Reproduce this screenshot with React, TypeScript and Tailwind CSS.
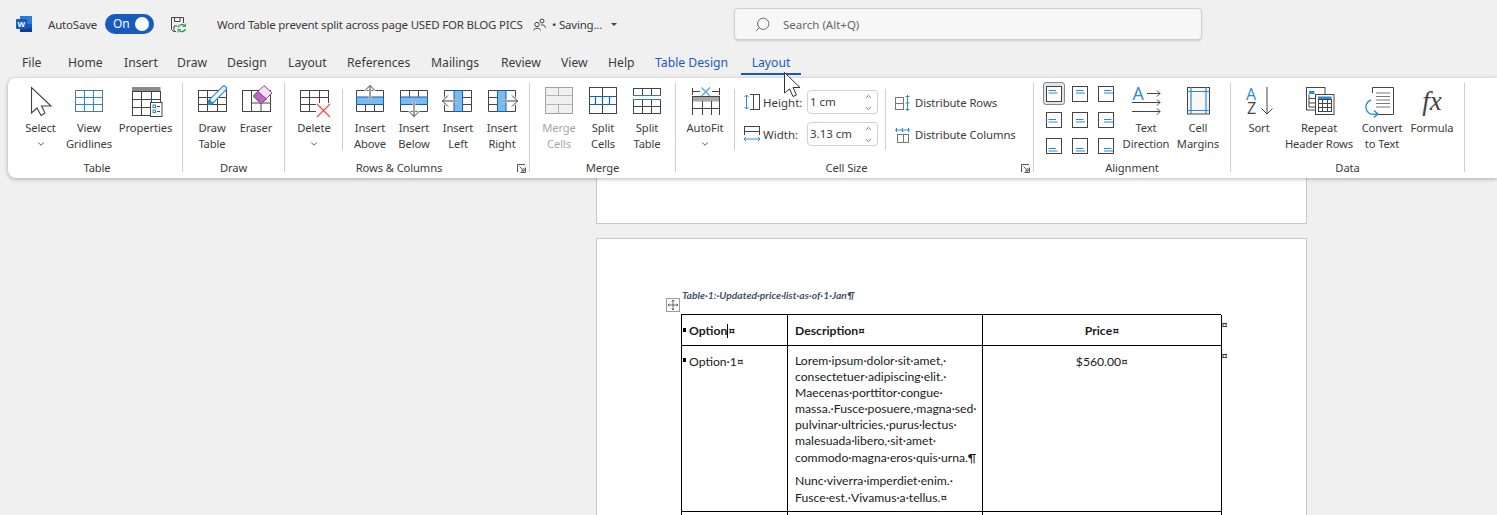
import React from 'react';
import { Search, ChevronDown, ChevronUp } from 'lucide-react';

const DK = '#444';
const BL = '#2b8ad8';
const NV = '#0f62b5';
const LB = '#7db9ea';

function G({ x, y, w, h, c = 1, r = 1, s = DK, f = 'none' }: { x: number; y: number; w: number; h: number; c?: number; r?: number; s?: string; f?: string }) {
  const cols = Array.from({ length: c - 1 }, (_, i) => x + Math.round(((i + 1) * w) / c));
  const rows = Array.from({ length: r - 1 }, (_, i) => y + Math.round(((i + 1) * h) / r));
  return (
    <g stroke={s} fill="none" strokeWidth="1" shapeRendering="crispEdges">
      <rect x={x + 0.5} y={y + 0.5} width={w} height={h} fill={f} />
      {cols.map((v) => (
        <line key={'c' + v} x1={v + 0.5} x2={v + 0.5} y1={y} y2={y + h} />
      ))}
      {rows.map((v) => (
        <line key={'r' + v} x1={x} x2={x + w} y1={v + 0.5} y2={v + 0.5} />
      ))}
    </g>
  );
}

function Ic({ children }: { children: React.ReactNode }) {
  return (
    <svg width="34" height="34" viewBox="0 0 34 34" className="block overflow-visible">
      {children}
    </svg>
  );
}

function Arrow({ d }: { d: string }) {
  return (
    <>
      <path d={d} stroke="#fff" strokeWidth="2.6" fill="none" />
      <path d={d} stroke={DK} fill="none" />
    </>
  );
}

const icons = {
  select: (
    <Ic>
      <path d="M7.5 3.5V29L13 24L17 31.5L21 29L17.5 22H27Z" fill="#fff" stroke={DK} strokeWidth="1.1" />
    </Ic>
  ),
  gridlines: (
    <Ic>
      <G x={3} y={6} w={27} h={21} c={3} r={3} s={BL} />
      <rect x="3.5" y="6.5" width="27" height="21" fill="none" stroke="#4a7a9f" />
    </Ic>
  ),
  properties: (
    <Ic>
      <G x={3} y={7} w={28} h={24} c={3} r={3} />
      <rect x="3" y="3" width="28.5" height="4" fill="#8c8c8c" />
      <rect x="21.5" y="18.5" width="11.5" height="14" fill="#fff" stroke={DK} />
      <rect x="24" y="21" width="2.5" height="2.5" fill="none" stroke={BL} />
      <rect x="24" y="26" width="2.5" height="2.5" fill="none" stroke={BL} />
      <path d="M28 22.5h3M28 27.5h3" stroke={DK} />
    </Ic>
  ),
  drawTable: (
    <Ic>
      <G x={3} y={6} w={28} h={21} c={3} r={3} />
      <path d="M16 17.5L29 4.5" stroke={BL} strokeWidth="6" strokeLinecap="round" />
      <path d="M16 17.5L29 4.5" stroke="#f4faff" strokeWidth="3.6" strokeLinecap="round" />
      <path d="M12.5 21.5L14 15L19 19.5Z" fill={BL} />
    </Ic>
  ),
  eraser: (
    <Ic>
      <G x={3} y={6} w={28} h={21} />
      <path d="M12.5 6V27M22 19V27M12.5 19H31" stroke={DK} />
      <path d="M14.5 12L25 1.5L33 9L22 20Z" fill="#f4e3f4" stroke="#8f3f94" />
      <path d="M14.5 12L19 7.5L27.5 15L22 20Z" fill="#c065c4" stroke="#8f3f94" />
    </Ic>
  ),
  deleteT: (
    <Ic>
      <G x={3} y={6} w={28} h={21} c={3} r={3} />
      <rect x="19" y="19" width="15" height="15" fill="#fff" />
      <path d="M20 20L33 33M33 20L20 33" stroke="#ee4f4f" strokeWidth="1.3" />
    </Ic>
  ),
  insAbove: (
    <Ic>
      <path d="M3.5 6.5V27.5H30.5V6.5H3.5M12.5 20V27M21.5 20V27" stroke={DK} fill="none" />
      <rect x="3.5" y="13" width="27" height="7.5" fill={LB} stroke={NV} />
      <Arrow d="M17 16V1.5M11.5 7L17 1.5L22.5 7" />
    </Ic>
  ),
  insBelow: (
    <Ic>
      <path d="M3.5 6.5V27.5H30.5V6.5H3.5M12.5 6V13M21.5 6V13" stroke={DK} fill="none" />
      <rect x="3.5" y="13" width="27" height="7.5" fill={LB} stroke={NV} />
      <Arrow d="M17 17V32.5M11.5 27L17 32.5L22.5 27" />
    </Ic>
  ),
  insLeft: (
    <Ic>
      <path d="M3.5 6.5V27.5H30.5V6.5H3.5M21 13.5H30M21 20.5H30" stroke={DK} fill="none" />
      <rect x="13" y="6.5" width="8.5" height="21" fill={LB} stroke={NV} />
      <Arrow d="M17 17H1.5M7 11.5L1.5 17L7 22.5" />
    </Ic>
  ),
  insRight: (
    <Ic>
      <path d="M3.5 6.5V27.5H30.5V6.5H3.5M4 13.5H13M4 20.5H13" stroke={DK} fill="none" />
      <rect x="12.5" y="6.5" width="8.5" height="21" fill={LB} stroke={NV} />
      <Arrow d="M17 17H32.5M27 11.5L32.5 17L27 22.5" />
    </Ic>
  ),
  merge: (
    <Ic>
      <G x={3} y={3} w={27} h={26} s="#a0a0a0" f="#f0f0f0" />
      <path d="M3 11.5H30M3 20.5H30M16.5 3V11M16.5 21V29" stroke="#b5b5b5" />
    </Ic>
  ),
  splitCells: (
    <Ic>
      <G x={3} y={3} w={27} h={26} />
      <path d="M16.5 3V12M16.5 21V29" stroke={DK} />
      <path d="M3 12.5H30M3 20.5H30M9.5 12.5V20.5M16.5 12.5V20.5M23.5 12.5V20.5" stroke={NV} strokeWidth="1.2" />
    </Ic>
  ),
  splitTable: (
    <Ic>
      <G x={3} y={4} w={27} h={7} c={3} />
      <path d="M3 11.5H31" stroke="#2b7cc4" />
      <G x={3} y={15} w={27} h={14} c={3} r={2} />
      <path d="M3 15.5H31" stroke="#2b7cc4" />
    </Ic>
  ),
  autofit: (
    <Ic>
      <path d="M4.5 4V11M31.5 4V11M5 7.5H12M24 7.5H31" stroke={DK} />
      <path d="M13.5 3.5L22 12M22 3.5L13.5 12" stroke="#55a8ea" strokeWidth="1.3" />
      <rect x="4" y="13" width="28" height="4.5" fill="#a8a8a8" />
      <path d="M4 12.5H32M4.5 13V31M31.5 13V31M14.5 17V31M23.5 17V31M4 24.5H32" stroke={DK} />
    </Ic>
  ),
  textDir: (
    <Ic>
      <text x="3.5" y="16" fontFamily="'Open Sans', sans-serif" fontSize="18" fill={BL}>
        A
      </text>
      <path d="M18 9.5H31M28 6.5L31 9.5L28 12.5" stroke={DK} fill="none" />
      <path d="M3 18.5H31M28 15.5L31 18.5L28 21.5" stroke={DK} fill="none" />
      <path d="M3 27.5H31M28 24.5L31 27.5L28 30.5" stroke={DK} fill="none" />
    </Ic>
  ),
  margins: (
    <Ic>
      <rect x="6" y="3" width="23" height="27" fill="#f7f7f7" />
      <rect x="6.5" y="3.5" width="22" height="26.5" fill="none" stroke={DK} />
      <path d="M6 7.5H29M6 26.5H29M10 3V30M25 3V30" stroke={BL} strokeWidth="1.2" />
    </Ic>
  ),
  sort: (
    <Ic>
      <text x="4" y="16" fontFamily="'Open Sans', sans-serif" fontSize="16" fill={BL}>
        A
      </text>
      <text x="5" y="30" fontFamily="'Open Sans', sans-serif" fontSize="16" fill={DK}>
        Z
      </text>
      <path d="M25 3V30M19.5 24.5L25 30L30.5 24.5" stroke={DK} fill="none" />
    </Ic>
  ),
  repeat: (
    <Ic>
      <rect x="4.5" y="3.5" width="18.5" height="22.5" fill="#fff" stroke={DK} />
      <rect x="7" y="7" width="5.5" height="3" fill={BL} />
      <path d="M7 10.5V23M7 14.5H13M7 19H13M7 23H13" stroke={DK} />
      <rect x="13.5" y="10.5" width="18.5" height="20" fill="#fff" stroke={DK} />
      <rect x="16" y="12.5" width="13.5" height="3" fill={BL} />
      <G x={16} y={15} w={13} h={12} c={3} r={3} />
    </Ic>
  ),
  convert: (
    <Ic>
      <path d="M7.5 9V3.5H28.5V30.5H9" fill="#fff" stroke={DK} />
      <path d="M11 9H25M11 12.5H25M11 16H25M11 19.5H25M11 23H25" stroke="#777" />
      <path d="M6 16C1.5 17.5 0 22 1.5 26C3 29.5 7 31 12 30" stroke={BL} strokeWidth="1.4" fill="none" />
      <path d="M9 26.5L13 30L9 33.5" stroke={BL} strokeWidth="1.4" fill="none" />
    </Ic>
  ),
};

function Btn({ icon, lines, w, chevron, off, extra }: { icon?: React.ReactNode; lines: string[]; w: string; chevron?: boolean; off?: boolean; extra?: React.ReactNode }) {
  return (
    <div className={`flex flex-col items-center ${w}`}>
      <div className="mt-[6px] flex h-[34px] w-[34px] items-center justify-center">{icon ?? extra}</div>
      <div className={`mt-[2px] text-center text-[11.2px] leading-[16px] tracking-[-0.1px] whitespace-nowrap ${off ? 'text-[#a6a6a6]' : 'text-[#3b3b3b]'}`}>
        {lines.map((l) => (
          <div key={l}>{l}</div>
        ))}
        {chevron && (
          <div className="flex h-[16px] items-center justify-center">
            <ChevronDown className="h-[10px] w-[10px]" strokeWidth={2} />
          </div>
        )}
      </div>
    </div>
  );
}

function Launcher() {
  return (
    <svg width="9" height="9" viewBox="0 0 9 9" className="absolute top-[4px] right-[3px]">
      <path d="M0.5 8V0.5H8M8.5 3.5V8.5H3.5M2.5 2.5L7 7M4 7H7V4" fill="none" stroke="#555" strokeWidth="1" />
    </svg>
  );
}

function Group({ label, w, pad, lab = '', launcher, children }: { label: string; w: string; pad: string; lab?: string; launcher?: boolean; children: React.ReactNode }) {
  return (
    <>
      <div className={`flex h-full flex-col ${w}`}>
        <div className={`flex h-[82px] ${pad}`}>{children}</div>
        <div className={`relative h-[18px] text-center text-[11.2px] leading-[16px] tracking-[-0.1px] text-[#3b3b3b] ${lab}`}>
          {label}
          {launcher && <Launcher />}
        </div>
      </div>
      <Sep h="h-[89px]" my="mt-[5px]" />
    </>
  );
}

function Sep({ h, my }: { h: string; my: string }) {
  return <div className={`w-px shrink-0 bg-[#cfcfcf] ${h} ${my}`} />;
}

function Spin({ value }: { value: string }) {
  return (
    <div className="flex h-[24px] w-[71px] items-center justify-between rounded-[4px] border border-[#d1d1d1] pr-[4px] pl-[2px] text-[11.5px] text-[#3b3b3b]">
      <span>{value}</span>
      <div className="flex flex-col text-[#555]">
        <ChevronUp className="h-[9px] w-[9px]" strokeWidth={2} />
        <ChevronDown className="mt-[3px] h-[9px] w-[9px]" strokeWidth={2} />
      </div>
    </div>
  );
}

function AlignCell({ v, h, on }: { v: 0 | 1 | 2; h: 0 | 1 | 2; on?: boolean }) {
  const y = [4.5, 7.5, 10.5][v];
  const x1 = [2.5, 4, 6][h];
  return (
    <div className="relative flex h-[26px] w-[26px] items-center justify-center">
      {on && <div className="absolute top-[1px] left-[2px] h-[23px] w-[22px] rounded-[3px] border border-[#8a8a8a] bg-[#e4e4e4]" />}
      <svg width="16" height="16" viewBox="0 0 16 16" className="relative">
        <rect x="0.5" y="0.5" width="15" height="15" fill="#fff" stroke={DK} />
        <path d={`M${x1} ${y}H${x1 + 7.5}M${x1} ${y + 2.5}H${x1 + 9}`} stroke={BL} />
      </svg>
    </div>
  );
}

const tabs = [
  { t: 'File', c: 'w-[68px] pl-[22px]' },
  { t: 'Home', c: 'w-[56px]' },
  { t: 'Insert', c: 'w-[53px]' },
  { t: 'Draw', c: 'w-[50px]' },
  { t: 'Design', c: 'w-[61px]' },
  { t: 'Layout', c: 'w-[59px]' },
  { t: 'References', c: 'w-[84px]' },
  { t: 'Mailings', c: 'w-[70px]' },
  { t: 'Review', c: 'w-[60px]' },
  { t: 'View', c: 'w-[47px]' },
  { t: 'Help', c: 'w-[47px]' },
  { t: 'Table Design', c: 'w-[95px] text-[#185abd]' },
];

const DOC = "font-['Lato',_'Open_Sans',_sans-serif]";

export default function App() {
  return (
    <div className="relative h-[515px] w-[1497px] overflow-hidden bg-[#f0f0f0] font-['Noto_Sans',_'Open_Sans',_sans-serif] text-[#3b3b3b]">
      {/* title bar */}
      <div className="flex h-[46px] items-center pt-[2px]">
        <div className="flex w-[734px] items-center text-[11.5px] tracking-[-0.2px]">
          <svg width="16" height="16" viewBox="0 0 16 16" className="ml-[16px]">
            <rect x="4" y="0" width="12" height="16" fill="#2b7cd3" />
            <rect x="4" y="8" width="12" height="4" fill="#185abd" />
            <rect x="4" y="12" width="12" height="4" fill="#103f91" />
            <rect x="0" y="3" width="11" height="10" rx="1" fill="#185abd" />
            <text x="1.5" y="11" fontSize="8" fontWeight="700" fill="#fff" fontFamily="'Liberation Sans', sans-serif">
              W
            </text>
          </svg>
          <span className="ml-[16px] w-[57px] pt-[1px]">AutoSave</span>
          <div className="flex h-[20px] w-[49px] items-center justify-between rounded-full bg-[#185abd] pr-[5px] pl-[8px] text-[12px] text-white">
            <span>On</span>
            <span className="h-[14px] w-[14px] rounded-full bg-white" />
          </div>
          <svg width="17" height="17" viewBox="0 0 17 17" className="ml-[16px]">
            <path d="M1.5 1.5H13.5V7M6 15.5H3.5L1.5 13.5V1.5M4.5 1.5V5.5H10V1.5M4 15V10H7" fill="none" stroke={DK} />
            <path d="M8 11.5A4 4 0 0 1 15 10M15.5 13A4 4 0 0 1 9 14.5" fill="none" stroke="#2e9e5b" strokeWidth="1.4" />
            <path d="M15.5 7.5V10.5H12.5M8 16.5V13.5H11" fill="none" stroke="#2e9e5b" />
          </svg>
          <span className="ml-[30px] w-[316px] pt-[1px] whitespace-nowrap">Word Table prevent split across page USED FOR BLOG PICS</span>
          <svg width="13" height="13" viewBox="0 0 13 13">
            <circle cx="4" cy="6.5" r="2.2" fill="none" stroke={DK} />
            <path d="M0.5 12.5C1 9.5 7 9.5 7.5 12.5" fill="none" stroke={DK} />
            <circle cx="9" cy="3" r="2" fill="none" stroke={DK} />
            <path d="M8 7C10 6.5 12.5 7.5 12.5 10" fill="none" stroke={DK} />
          </svg>
          <span className="ml-[6px] pt-[1px] whitespace-nowrap">• Saving...</span>
          <span className="ml-[9px] h-0 w-0 border-x-[3px] border-t-[3px] border-x-transparent border-t-[#444]" />
        </div>
        <div className="flex h-[32px] w-[468px] items-center rounded-[4px] border border-[#cfcfcf] bg-[#f7f7f7] pl-[19px] text-[11.5px] text-[#666] shadow-[0_1px_2px_rgba(0,0,0,0.15)]">
          <Search className="h-[17px] w-[17px] -scale-x-100 text-[#555]" strokeWidth={1.2} />
          <span className="ml-[12px] pt-[1px]">Search (Alt+Q)</span>
        </div>
      </div>

      {/* tabs */}
      <div className="flex h-[32px] items-center pt-[2px] text-[12.2px]">
        {tabs.map((t) => (
          <span key={t.t} className={`shrink-0 pt-[1px] whitespace-nowrap ${t.c}`}>
            {t.t}
          </span>
        ))}
        <div className="relative ml-[-9px] flex h-[30px] w-[60px] items-center justify-center pt-[1px] text-[#185abd]">
          Layout
          <div className="absolute right-0 bottom-[3px] left-0 h-[2px] bg-[#185abd]" />
        </div>
      </div>

      {/* ribbon */}
      <div className="relative z-10 ml-[8px] flex h-[100px] items-start rounded-l-lg bg-white shadow-[0_1px_4px_rgba(0,0,0,0.3)]">
        <Group label="Table" w="w-[174px]" pad="pl-[10px]" lab="pl-[4px]">
          <Btn w="w-[45px]" icon={icons.select} lines={['Select']} chevron />
          <Btn w="w-[52px]" icon={icons.gridlines} lines={['View', 'Gridlines']} />
          <Btn w="w-[61px]" icon={icons.properties} lines={['Properties']} />
        </Group>
        <Group label="Draw" w="w-[101px]" pad="pl-[7px]">
          <Btn w="w-[44px]" icon={icons.drawTable} lines={['Draw', 'Table']} />
          <Btn w="w-[44px]" icon={icons.eraser} lines={['Eraser']} />
        </Group>
        <Group label="Rows & Columns" w="w-[244px]" pad="pl-[4px]" lab="pr-[16px]" launcher>
          <Btn w="w-[50px]" icon={icons.deleteT} lines={['Delete']} chevron />
          <div className="mr-[5px] ml-[3px]">
            <Sep h="h-[61px]" my="mt-[11px]" />
          </div>
          <Btn w="w-[44px]" icon={icons.insAbove} lines={['Insert', 'Above']} />
          <Btn w="w-[44px]" icon={icons.insBelow} lines={['Insert', 'Below']} />
          <Btn w="w-[44px]" icon={icons.insLeft} lines={['Insert', 'Left']} />
          <Btn w="w-[44px]" icon={icons.insRight} lines={['Insert', 'Right']} />
        </Group>
        <Group label="Merge" w="w-[145px]" pad="pl-[7px]">
          <Btn w="w-[44px]" icon={icons.merge} lines={['Merge', 'Cells']} off />
          <Btn w="w-[44px]" icon={icons.splitCells} lines={['Split', 'Cells']} />
          <Btn w="w-[44px]" icon={icons.splitTable} lines={['Split', 'Table']} />
        </Group>
        <Group label="Cell Size" w="w-[357px]" pad="pl-[4px]" lab="pr-[16px]" launcher>
          <Btn w="w-[50px]" icon={icons.autofit} lines={['AutoFit']} chevron />
          <div className="ml-[4px]">
            <Sep h="h-[61px]" my="mt-[11px]" />
          </div>
          <div className="flex w-[150px] flex-col gap-[8px] pt-[12px] pl-[9px] text-[11.5px]">
            <div className="flex items-center">
              <svg width="16" height="16" viewBox="0 0 16 16">
                <path d="M2.5 1V15M0.5 3L2.5 1L4.5 3M0.5 13L2.5 15L4.5 13" fill="none" stroke={BL} />
                <rect x="9.5" y="0.5" width="6" height="15" fill="none" stroke={DK} />
                <path d="M6 0.5H9M6 15.5H9" stroke={DK} />
              </svg>
              <span className="ml-[3px] w-[44px] pt-[1px]">Height:</span>
              <Spin value="1 cm" />
            </div>
            <div className="flex items-center">
              <svg width="16" height="16" viewBox="0 0 16 16">
                <rect x="0.5" y="0.5" width="15" height="5" fill="none" stroke={DK} />
                <path d="M0.5 6V9M15.5 6V9" stroke={DK} />
                <path d="M0 13H16M2 11L0 13L2 15M14 11L16 13L14 15" fill="none" stroke={BL} />
              </svg>
              <span className="ml-[3px] w-[44px] pt-[1px]">Width:</span>
              <Spin value="3.13 cm" />
            </div>
          </div>
          <Sep h="h-[61px]" my="mt-[11px]" />
          <div className="flex flex-col gap-[16px] pt-[17px] pl-[9px] text-[11.3px] tracking-[-0.1px] whitespace-nowrap">
            <div className="flex h-[16px] items-center">
              <svg width="16" height="16" viewBox="0 0 16 16">
                <G x={0} y={2} w={8} h={12} c={1} r={2} s="#777" />
                <path d="M12.5 0V16M10.5 1.5H14.5M10.5 8H14.5M10.5 14.5H14.5" stroke={BL} fill="none" />
              </svg>
              <span className="ml-[4px]">Distribute Rows</span>
            </div>
            <div className="flex h-[16px] items-center">
              <svg width="16" height="16" viewBox="0 0 16 16">
                <path d="M0 3H15M1.5 1V5M7.5 1V5M13.5 1V5" stroke={BL} fill="none" />
                <G x={2} y={7} w={11} h={8} c={2} s="#777" />
              </svg>
              <span className="ml-[4px]">Distribute Columns</span>
            </div>
          </div>
        </Group>
        <Group label="Alignment" w="w-[196px]" pad="pl-[7px]">
          <div className="grid h-[78px] w-[78px] grid-cols-3 pt-[3px]">
            <AlignCell v={0} h={0} on />
            <AlignCell v={0} h={1} />
            <AlignCell v={0} h={2} />
            <AlignCell v={1} h={0} />
            <AlignCell v={1} h={1} />
            <AlignCell v={1} h={2} />
            <AlignCell v={2} h={0} />
            <AlignCell v={2} h={1} />
            <AlignCell v={2} h={2} />
          </div>
          <Btn w="w-[52px] ml-[1px]" icon={icons.textDir} lines={['Text', 'Direction']} />
          <Btn w="w-[52px]" icon={icons.margins} lines={['Cell', 'Margins']} />
        </Group>
        <Group label="Data" w="w-[233px]" pad="pl-[6px]">
          <Btn w="w-[44px]" icon={icons.sort} lines={['Sort']} />
          <Btn w="w-[76px]" icon={icons.repeat} lines={['Repeat', 'Header Rows']} />
          <Btn w="w-[50px]" icon={icons.convert} lines={['Convert', 'to Text']} />
          <Btn
            w="w-[50px]"
            lines={['Formula']}
            extra={<span className="font-['Liberation_Serif',_serif] text-[27px] leading-none text-[#444] italic">fx</span>}
          />
        </Group>
      </div>

      {/* document */}
      <div className="pl-[596px]">
        <div className="h-[46px] w-[711px] border-x border-b border-[#c8c8c8] bg-white" />
        <div className={`mt-[14px] h-[300px] w-[711px] border border-[#c8c8c8] bg-white pt-[49px] pl-[84px] text-[#1a1a1a] ${DOC}`}>
          <div className="pl-[1px] text-[10.3px] leading-[14px] font-bold text-[#44546a] italic">Table·1:·Updated·price·list·as·of·1·Jan¶</div>
          <div className="relative mt-[12px] w-[540px] text-[12.2px] leading-[16px]">
            <div className="absolute top-[-16px] left-[-15px] flex h-[14px] w-[14px] items-center justify-center border border-[#9a9a9a] bg-white">
              <svg width="10" height="10" viewBox="0 0 10 10">
                <path d="M5 0V10M0 5H10M3.8 1.5L5 0L6.2 1.5M3.8 8.5L5 10L6.2 8.5M1.5 3.8L0 5L1.5 6.2M8.5 3.8L10 5L8.5 6.2" fill="none" stroke="#444" strokeWidth="0.8" />
              </svg>
            </div>
            <div className="absolute top-[3px] -right-[7px] text-[12px]">¤</div>
            <div className="absolute top-[34px] -right-[7px] text-[12px]">¤</div>
            <div className="grid grid-cols-[106px_195px_239px] border-t border-l border-black">
              <div className="flex h-[31px] items-center border-r border-b border-black pt-[2px] pl-[1px] font-bold">
                <span className="mr-[3px] mb-[3px] h-[4px] w-[3px] bg-black" />
                <span>Option</span>
                <span className="h-[14px] w-px bg-black" />
                <span>¤</span>
              </div>
              <div className="flex h-[31px] items-center border-r border-b border-black pt-[2px] pl-[7px] font-bold">Description¤</div>
              <div className="flex h-[31px] items-center justify-center border-r border-b border-black pt-[2px] font-bold">Price¤</div>
              <div className="flex h-[166px] items-start border-r border-b border-black pt-[8px] pl-[1px]">
                <span className="mt-[4px] mr-[3px] h-[4px] w-[3px] bg-black" />
                <span>Option·1¤</span>
              </div>
              <div className="h-[166px] border-r border-b border-black pt-[7px] pl-[7px] whitespace-nowrap">
                <div>Lorem·ipsum·dolor·sit·amet,·</div>
                <div>consectetuer·adipiscing·elit.·</div>
                <div>Maecenas·porttitor·congue·</div>
                <div>massa.·Fusce·posuere,·magna·sed·</div>
                <div>pulvinar·ultricies,·purus·lectus·</div>
                <div>malesuada·libero,·sit·amet·</div>
                <div className="mt-[1px]">commodo·magna·eros·quis·urna.¶</div>
                <div className="mt-[7px]">Nunc·viverra·imperdiet·enim.·</div>
                <div className="mt-[1px]">Fusce·est.·Vivamus·a·tellus.¤</div>
              </div>
              <div className="h-[166px] border-r border-b border-black pt-[8px] text-center">$560.00¤</div>
              <div className="h-[30px] border-r border-black" />
              <div className="h-[30px] border-r border-black" />
              <div className="h-[30px] border-r border-black" />
            </div>
          </div>
        </div>
      </div>

      {/* mouse pointer */}
      <svg width="22" height="30" viewBox="0 0 22 30" className="absolute top-[71px] left-[783px] z-20">
        <path d="M1.5 1.5V22L6.5 18L10 25.5L13.5 24L10 16.5H17Z" fill="#fff" stroke="#333" strokeWidth="1" />
      </svg>
    </div>
  );
}
